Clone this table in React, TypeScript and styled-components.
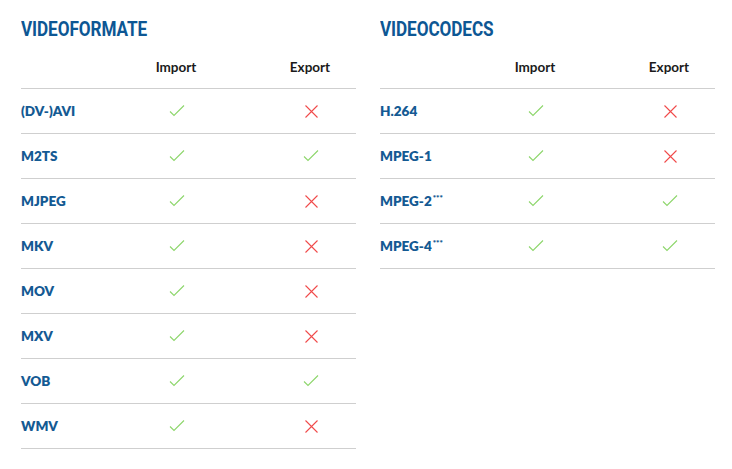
import React from "react";
import styled, { createGlobalStyle } from "styled-components";

const Global = createGlobalStyle`
  html, body { margin: 0; padding: 0; background: #fff; }
  body { font-family: "Lato", "Open Sans", sans-serif; -webkit-font-smoothing: antialiased; }
`;

const Page = styled.div`
  width: 732px;
  height: 469px;
  display: flex;
  gap: 24px;
  padding: 17px 17px 0 21px;
  box-sizing: border-box;
`;

const Section = styled.section`
  width: 335px;
  display: flex;
  flex-direction: column;
`;

const Title = styled.h2`
  margin: 0;
  height: 24px;
  font-family: "Roboto", sans-serif;
  font-weight: 700;
  font-size: 19.5px;
  line-height: 26px;
  letter-spacing: -0.1px;
  color: #0d5794;
  transform: scaleX(0.88);
  transform-origin: left center;
  white-space: nowrap;
`;

const Row = styled.div<{ $head?: boolean }>`
  display: grid;
  grid-template-columns: 67px 176px 92px;
  align-items: center;
  height: ${(p) => (p.$head ? "47px" : "44px")};
  border-bottom: 1px solid #cfcfcf;
`;

const HeadCell = styled.div`
  text-align: center;
  font-family: "Lato", sans-serif;
  font-weight: 700;
  font-size: 13.5px;
  color: #1b1b1b;
  padding-top: 4px;
`;

const Name = styled.div`
  font-family: "Lato", sans-serif;
  font-weight: 800;
  font-size: 13.5px;
  color: #145a93;
  white-space: nowrap;
  sup {
    font-size: 8px;
    vertical-align: 5px;
    margin-left: 1px;
  }
`;

const IconCell = styled.div`
  display: flex;
  justify-content: center;
  align-items: center;
`;

const Check = () => (
  <svg width="16" height="12" viewBox="0 0 16 12" style={{ marginLeft: 1 }}>
    <polyline points="1,6.5 5,10.5 15,0.5" fill="none" stroke="#8dd66b" strokeWidth="1.1" />
  </svg>
);

const Cross = () => (
  <svg width="13" height="13" viewBox="0 0 13 13" style={{ marginLeft: 2 }}>
    <path d="M0.5 0.5 L12.5 12.5 M12.5 0.5 L0.5 12.5" fill="none" stroke="#f04a4a" strokeWidth="1.1" />
  </svg>
);

type Item = { name: string; sup?: string; imp: boolean; exp: boolean };

const formats: Item[] = [
  { name: "(DV-)AVI", imp: true, exp: false },
  { name: "M2TS", imp: true, exp: true },
  { name: "MJPEG", imp: true, exp: false },
  { name: "MKV", imp: true, exp: false },
  { name: "MOV", imp: true, exp: false },
  { name: "MXV", imp: true, exp: false },
  { name: "VOB", imp: true, exp: true },
  { name: "WMV", imp: true, exp: false },
];

const codecs: Item[] = [
  { name: "H.264", imp: true, exp: false },
  { name: "MPEG-1", imp: true, exp: false },
  { name: "MPEG-2", sup: "***", imp: true, exp: true },
  { name: "MPEG-4", sup: "***", imp: true, exp: true },
];

const Table = ({ title, items }: { title: string; items: Item[] }) => (
  <Section>
    <Title>{title}</Title>
    <Row $head>
      <div />
      <HeadCell>Import</HeadCell>
      <HeadCell>Export</HeadCell>
    </Row>
    {items.map((it) => (
      <Row key={it.name}>
        <Name>
          {it.name}
          {it.sup && <sup>{it.sup}</sup>}
        </Name>
        <IconCell>{it.imp ? <Check /> : <Cross />}</IconCell>
        <IconCell>{it.exp ? <Check /> : <Cross />}</IconCell>
      </Row>
    ))}
  </Section>
);

export default function App() {
  return (
    <>
      <Global />
      <Page>
        <Table title="VIDEOFORMATE" items={formats} />
        <Table title="VIDEOCODECS" items={codecs} />
      </Page>
    </>
  );
}
